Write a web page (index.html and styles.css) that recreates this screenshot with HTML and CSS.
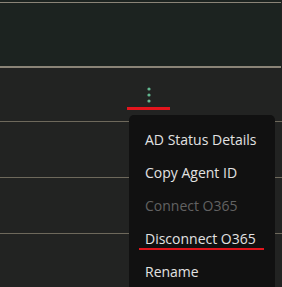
FILE: index.html
```html
<!DOCTYPE html>
<html lang="en">
<head>
  <meta charset="UTF-8" />
  <title>Agents</title>
  <link rel="stylesheet" href="styles.css">
</head>
<body>

  <div class="table-head"></div>

  <div class="table-body">
    <div class="row first">
      <button class="kebab">
        <svg width="4" height="16" viewBox="0 0 4 16">
          <circle cx="2" cy="2" r="1.6" fill="#62b890"/>
          <circle cx="2" cy="8" r="1.6" fill="#62b890"/>
          <circle cx="2" cy="14" r="1.6" fill="#62b890"/>
        </svg>
      </button>
    </div>
    <div class="row"></div>
    <div class="row"></div>
    <div class="row"></div>
  </div>

  <!-- annotation marks -->
  <div class="mark mark-kebab"></div>

  <!-- ACTIONS MENU -->
  <ul class="menu">
    <li>AD Status Details</li>
    <li>Copy Agent ID</li>
    <li class="disabled">Connect O365</li>
    <li>Disconnect O365</li>
    <li>Rename</li>
  </ul>

  <div class="mark mark-item"></div>

</body>
</html>
```

FILE: styles.css
```css
* {
  margin: 0; padding: 0;
  box-sizing: border-box;
  font-family: 'Open Sans', sans-serif;
}

body, html {
  height: 100%;
  overflow: hidden;
}

body {
  background-color: #222322;
  position: relative;
}

.table-head {
  height: 68px;
  background-color: #1c2320;
  border-top: 2px solid #1c2320;
  border-bottom: 2px solid #8a8477;
  box-shadow: inset 0 1px 0 #8a8477;
  margin-right: 1px;
}

.row {
  height: 56px;
  border-bottom: 1px solid #6e695c;
  display: flex;
  align-items: center;
}

.row.first {
  height: 54px;
}

.kebab {
  background: none;
  border: none;
  margin-left: 147px;
  margin-top: 1px;
  display: flex;
  cursor: pointer;
}

.mark {
  position: absolute;
  background-color: #e3151d;
}

.mark-kebab {
  left: 127px;
  top: 107px;
  width: 43px;
  height: 3px;
}

.mark-item {
  left: 139px;
  top: 248px;
  width: 125px;
  height: 2px;
}

.menu {
  position: absolute;
  left: 129px;
  top: 115px;
  width: 146px;
  height: 172px;
  list-style: none;
  background-color: #111111;
  border-radius: 5px 5px 0 0;
  padding: 8px 0 0;
  overflow: hidden;
}

.menu li {
  font-size: 14px;
  line-height: 33px;
  padding-left: 16px;
  color: #e2e2e2;
  cursor: pointer;
}

.menu li.disabled {
  color: #626262;
  cursor: default;
}
```
